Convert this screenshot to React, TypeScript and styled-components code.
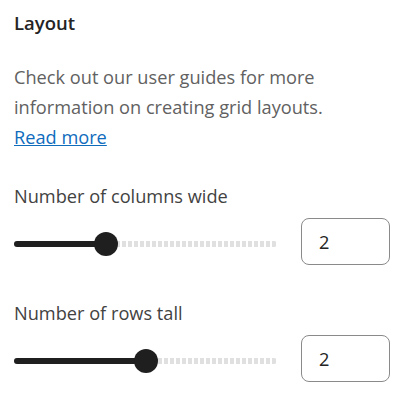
import React from "react";
import styled, { createGlobalStyle } from "styled-components";

const GlobalStyle = createGlobalStyle`
  body {
    margin: 0;
    background: #ffffff;
    font-family: "Open Sans", "Noto Sans", sans-serif;
  }
`;

type SliderRowProps = {
  label: string;
  value: number;
  percent: number;
};

function SliderRow({ label, value, percent }: SliderRowProps) {
  return (
    <Field>
      <FieldLabel>{label}</FieldLabel>
      <Controls>
        <Track>
          <Filled style={{ width: `${percent}%` }} />
          <Thumb style={{ left: `${percent}%` }} />
        </Track>
        <NumberBox>{value}</NumberBox>
      </Controls>
    </Field>
  );
}

export default function App() {
  return (
    <>
      <GlobalStyle />
      <Panel>
        <Title>Layout</Title>
        <Description>
          Check out our user guides for more information on creating grid
          layouts.
          <br />
          <ReadMore href="#">Read more</ReadMore>
        </Description>
        <SliderRow label="Number of columns wide" value={2} percent={35} />
        <SliderRow label="Number of rows tall" value={2} percent={50.2} />
      </Panel>
    </>
  );
}

const Panel = styled.div`
  width: 404px;
  box-sizing: border-box;
  padding: 8px 14px 0 14px;
  display: flex;
  flex-direction: column;
`;

const Title = styled.h2`
  margin: 0;
  font-size: 18.5px;
  font-weight: 600;
  line-height: 30px;
  color: #242424;
`;

const Description = styled.p`
  margin: 24px 0 0 0;
  width: 340px;
  font-size: 18.2px;
  line-height: 30px;
  color: #616161;
`;

const ReadMore = styled.a`
  color: #0f6cbd;
  text-decoration: underline;
`;

const Field = styled.div`
  margin-top: 29px;
  display: flex;
  flex-direction: column;

  & + & {
    margin-top: 33px;
  }
`;

const FieldLabel = styled.div`
  font-size: 18.2px;
  line-height: 30px;
  color: #424242;
`;

const Controls = styled.div`
  margin-top: 7px;
  display: flex;
  align-items: center;
  gap: 24px;
`;

const Track = styled.div`
  position: relative;
  width: 263px;
  height: 6px;
  margin-top: 5px;
  border-radius: 3px;
  background: repeating-linear-gradient(
    to right,
    #e0e0e0 0,
    #e0e0e0 4px,
    transparent 4px,
    transparent 6px
  );
`;

const Filled = styled.div`
  height: 6px;
  border-radius: 3px;
  background: #1f1f1f;
`;

const Thumb = styled.div`
  position: absolute;
  top: 50%;
  width: 24px;
  height: 24px;
  border-radius: 50%;
  background: #1f1f1f;
  transform: translate(-50%, -50%);
`;

const NumberBox = styled.div`
  box-sizing: border-box;
  width: 89px;
  height: 47px;
  padding-left: 17px;
  display: flex;
  align-items: center;
  border: 1px solid #8a8a8a;
  border-radius: 8px;
  font-size: 18.2px;
  color: #242424;
`;
